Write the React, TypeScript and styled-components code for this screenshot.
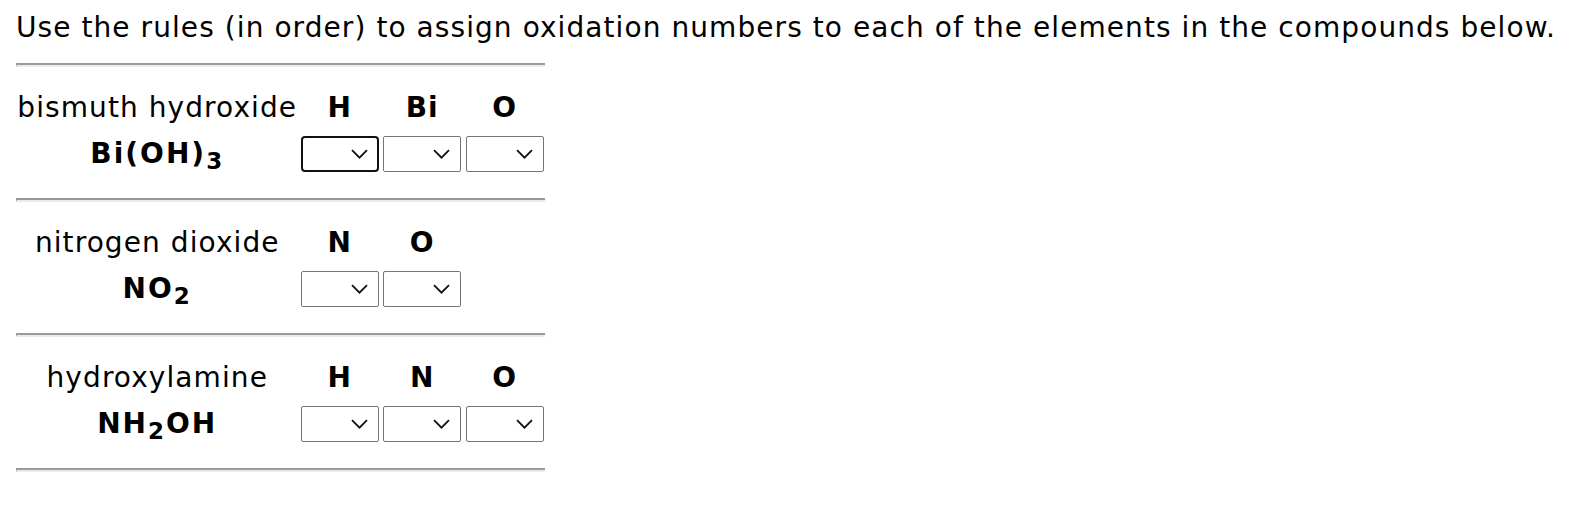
import React from 'react'
import styled, { createGlobalStyle } from 'styled-components'

const GlobalStyle = createGlobalStyle`
  body {
    margin: 0;
    background: #ffffff;
    font-family: Verdana, "DejaVu Sans", sans-serif;
    color: #000000;
  }
`

const compounds = [
  {
    id: 1,
    name: "bismuth hydroxide",
    formula: [["Bi(OH)", false], ["3", true]],
    elements: ["H", "Bi", "O"],
  },
  {
    id: 2,
    name: "nitrogen dioxide",
    formula: [["NO", false], ["2", true]],
    elements: ["N", "O"],
  },
  {
    id: 3,
    name: "hydroxylamine",
    formula: [["NH", false], ["2", true], ["OH", false]],
    elements: ["H", "N", "O"],
  },
]

function Chevron() {
  return (
    <svg width="17" height="10" viewBox="0 0 17 10">
      <path d="M1 1.2 L8.5 8.7 L16 1.2" fill="none" stroke="#111" strokeWidth="1.8" />
    </svg>
  )
}

function App() {
  return (
    <Page>
      <GlobalStyle />
      <Title>Use the rules (in order) to assign oxidation numbers to each of the elements in the compounds below.</Title>
      <Rule />
      {
        compounds.map((c, i) => {
          return <React.Fragment key={c.id}>
            <Block>
              <Name>{c.name}</Name>
              {c.elements.map((el, j) => <Element key={j}>{el}</Element>)}
              <Formula>
                {c.formula.map(([t, sub], k) => sub ? <Sub key={k}>{t}</Sub> : <span key={k}>{t}</span>)}
              </Formula>
              {c.elements.map((el, j) => (
                <Cell key={j}>
                  <Select focused={i === 0 && j === 0} role="combobox" aria-label={el}>
                    <Chevron />
                  </Select>
                </Cell>
              ))}
            </Block>
            <Rule />
          </React.Fragment>
        })
      }
    </Page>
  )
}

export default App

const Page = styled.div`
  padding: 11px 0 0 16px;
`

const Title = styled.p`
  margin: 0 0 18px;
  font-size: 28px;
  line-height: 34px;
  letter-spacing: 1.07px;
  white-space: nowrap;
`

const Rule = styled.div`
  width: 529px;
  height: 0;
  border-top: 2px solid #9a9a9a;
  border-bottom: 2px solid #ebebeb;
  border-left: 1px solid #9a9a9a;
  box-sizing: border-box;
`

const Block = styled.div`
  display: grid;
  grid-template-columns: 282.5px repeat(3, 82.5px);
  grid-template-rows: 34px 36px;
  row-gap: 11px;
  align-items: center;
  padding: 24px 0 26px;
  width: 529px;
`

const Name = styled.div`
  grid-row: 1;
  grid-column: 1;
  text-align: center;
  font-size: 28px;
  line-height: 34px;
  letter-spacing: 1.08px;
  white-space: nowrap;
`

const Element = styled.div`
  grid-row: 1;
  text-align: center;
  font-size: 28px;
  font-weight: 700;
  line-height: 34px;
  letter-spacing: 1px;
`

const Formula = styled.div`
  grid-row: 2;
  grid-column: 1;
  text-align: center;
  font-size: 28px;
  font-weight: 700;
  line-height: 36px;
  letter-spacing: 2px;
  white-space: nowrap;
`

const Sub = styled.span`
  font-size: 23px;
  position: relative;
  top: 6px;
`

const Cell = styled.div`
  grid-row: 2;
  display: flex;
  justify-content: center;
`

const Select = styled.div<{ focused?: boolean }>`
  width: 78px;
  height: 36px;
  box-sizing: border-box;
  display: flex;
  align-items: center;
  justify-content: flex-end;
  padding-right: ${p => p.focused ? '9px' : '10px'};
  border: ${p => p.focused ? '2px solid #111111' : '1px solid #767676'};
  border-radius: ${p => p.focused ? '4px' : '2px'};
  background: #ffffff;
`
